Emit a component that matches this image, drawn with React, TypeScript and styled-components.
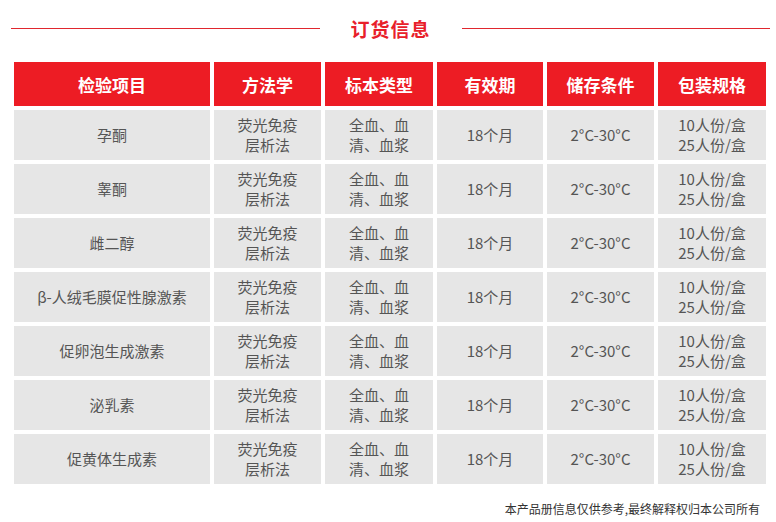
import styled, { createGlobalStyle } from 'styled-components';

const GlobalStyle = createGlobalStyle`
  body {
    margin: 0;
    background: #fff;
    font-family: "Noto Sans CJK SC", "Noto Sans", sans-serif;
  }
`;

const Page = styled.div`
  width: 776px;
  height: 522px;
  overflow: hidden;
`;

const TitleRow = styled.div`
  height: 56px;
  display: flex;
  align-items: center;
  gap: 31px;
  padding: 0 6px 0 11px;
  margin-bottom: 6px;
`;

const Line = styled.div`
  flex: 1;
  height: 1px;
  background: #e0272e;
`;

const Title = styled.h2`
  margin: 0;
  font-size: 19px;
  font-weight: 700;
  color: #e8202a;
  letter-spacing: 1px;
`;

const Table = styled.div`
  display: grid;
  grid-template-columns: 196px 107px 108px 106px 107px 108px;
  grid-template-rows: 44px;
  grid-auto-rows: 50px;
  gap: 4px;
  margin-left: 14px;
`;

const HeadCell = styled.div`
  background: #ed1c24;
  color: #fff;
  font-size: 17px;
  font-weight: 700;
  display: flex;
  align-items: center;
  justify-content: center;
`;

const Cell = styled.div`
  background: #e6e6e6;
  color: #555;
  font-size: 15px;
  line-height: 20px;
  display: flex;
  flex-direction: column;
  align-items: center;
  justify-content: center;
  text-align: center;
`;

const Footer = styled.p`
  margin: 16px 16px 0 0;
  text-align: right;
  font-size: 12px;
  color: #333;
`;

const headers = ['检验项目', '方法学', '标本类型', '有效期', '储存条件', '包装规格'];

const items = ['孕酮', '睾酮', '雌二醇', 'β-人绒毛膜促性腺激素', '促卵泡生成激素', '泌乳素', '促黄体生成素'];

export default function App() {
  return (
    <Page>
      <GlobalStyle />
      <TitleRow>
        <Line />
        <Title>订货信息</Title>
        <Line />
      </TitleRow>
      <Table>
        {headers.map((h) => (
          <HeadCell key={h}>{h}</HeadCell>
        ))}
        {items.map((name) => [
          <Cell key={name + '0'}>{name}</Cell>,
          <Cell key={name + '1'}>
            <span>荧光免疫</span>
            <span>层析法</span>
          </Cell>,
          <Cell key={name + '2'}>
            <span>全血、血</span>
            <span>清、血浆</span>
          </Cell>,
          <Cell key={name + '3'}>18个月</Cell>,
          <Cell key={name + '4'}>2°C-30°C</Cell>,
          <Cell key={name + '5'}>
            <span>10人份/盒</span>
            <span>25人份/盒</span>
          </Cell>,
        ])}
      </Table>
      <Footer>本产品册信息仅供参考,最终解释权归本公司所有</Footer>
    </Page>
  );
}
